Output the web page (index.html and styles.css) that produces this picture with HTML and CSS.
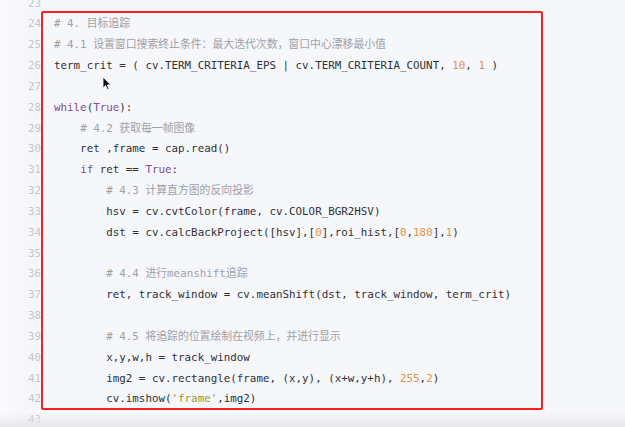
FILE: index.html
```html
<!DOCTYPE html>
<html lang="zh-CN">
<head>
<meta charset="utf-8">
<title>code</title>
<link rel="stylesheet" href="styles.css">
</head>
<body>
<div class="page">
  <div class="strip"></div>
  <div class="code">
    <div class="lines">
      <div class="line"><span class="ln">23</span><span class="src"></span></div>
      <div class="line"><span class="ln">24</span><span class="src"><span class="c"># 4. 目标追踪</span></span></div>
      <div class="line"><span class="ln">25</span><span class="src"><span class="c"># 4.1 设置窗口搜索终止条件：最大迭代次数，窗口中心漂移最小值</span></span></div>
      <div class="line"><span class="ln">26</span><span class="src">term_crit = ( cv.TERM_CRITERIA_EPS | cv.TERM_CRITERIA_COUNT, <span class="n">10</span>, <span class="n">1</span> )</span></div>
      <div class="line"><span class="ln">27</span><span class="src"></span></div>
      <div class="line"><span class="ln">28</span><span class="src"><span class="k">while</span>(<span class="k">True</span>):</span></div>
      <div class="line"><span class="ln">29</span><span class="src">    <span class="c"># 4.2 获取每一帧图像</span></span></div>
      <div class="line"><span class="ln">30</span><span class="src">    ret ,frame = cap.read()</span></div>
      <div class="line"><span class="ln">31</span><span class="src">    <span class="k">if</span> ret == <span class="k">True</span>:</span></div>
      <div class="line"><span class="ln">32</span><span class="src">        <span class="c"># 4.3 计算直方图的反向投影</span></span></div>
      <div class="line"><span class="ln">33</span><span class="src">        hsv = cv.cvtColor(frame, cv.COLOR_BGR2HSV)</span></div>
      <div class="line"><span class="ln">34</span><span class="src">        dst = cv.calcBackProject([hsv],[<span class="n">0</span>],roi_hist,[<span class="n">0</span>,<span class="n">180</span>],<span class="n">1</span>)</span></div>
      <div class="line"><span class="ln">35</span><span class="src"></span></div>
      <div class="line"><span class="ln">36</span><span class="src">        <span class="c"># 4.4 进行meanshift追踪</span></span></div>
      <div class="line"><span class="ln">37</span><span class="src">        ret, track_window = cv.meanShift(dst, track_window, term_crit)</span></div>
      <div class="line"><span class="ln">38</span><span class="src"></span></div>
      <div class="line"><span class="ln">39</span><span class="src">        <span class="c"># 4.5 将追踪的位置绘制在视频上，并进行显示</span></span></div>
      <div class="line"><span class="ln">40</span><span class="src">        x,y,w,h = track_window</span></div>
      <div class="line"><span class="ln">41</span><span class="src">        img2 = cv.rectangle(frame, (x,y), (x+w,y+h), <span class="n">255</span>,<span class="n">2</span>)</span></div>
      <div class="line"><span class="ln">42</span><span class="src">        cv.imshow(<span class="s">'frame'</span>,img2)</span></div>
      <div class="line"><span class="ln">43</span><span class="src"></span></div>
    </div>
  </div>
  <div class="highlight"></div>
  <svg class="cursor" width="10" height="15" viewBox="0 0 10 15">
    <path d="M1 1 L1 12 L3.6 9.6 L5.4 13.6 L7 12.9 L5.3 9 L8.8 9 Z" fill="#111" stroke="#fff" stroke-width="0.8" stroke-linejoin="round"/>
  </svg>
  <div class="shade"></div>
</div>
</body>
</html>
```

FILE: styles.css
```css
html, body {
  margin: 0;
  padding: 0;
}
body {
  width: 625px;
  height: 427px;
  overflow: hidden;
  background: #f6f7fb;
}
.page {
  position: relative;
  display: flex;
  width: 625px;
  height: 427px;
  overflow: hidden;
  background: #f6f7fb;
}
.strip {
  width: 17px;
  flex: none;
  background: linear-gradient(to right, #fbfbfd, #f8f8fb);
}
.code {
  flex: 1;
  font-family: "DejaVu Sans Mono", "Noto Sans CJK SC", monospace;
  font-size: 10.85px;
  color: #2f3135;
}
.lines {
  margin-top: -6.4px;
}
.line {
  display: flex;
  height: 20.83px;
  line-height: 20.83px;
}
.ln {
  width: 24px;
  flex: none;
  text-align: right;
  color: #c3c6cc;
}
.src {
  padding-left: 13px;
  white-space: pre;
}
.c { color: #9fa1a6; }
.k { color: #7d4d9c; }
.n { color: #e5914a; }
.s { color: #939b2a; }
.highlight {
  position: absolute;
  left: 41px;
  top: 11px;
  width: 498px;
  height: 395px;
  border: 2.6px solid #fb1f1f;
  border-radius: 2px;
}
.cursor {
  position: absolute;
  left: 102px;
  top: 76px;
}
.shade {
  position: absolute;
  left: 0;
  right: 0;
  bottom: 0;
  height: 14px;
  background: linear-gradient(to bottom, rgba(232,232,236,0), rgba(230,230,234,0.9));
  pointer-events: none;
}
```
